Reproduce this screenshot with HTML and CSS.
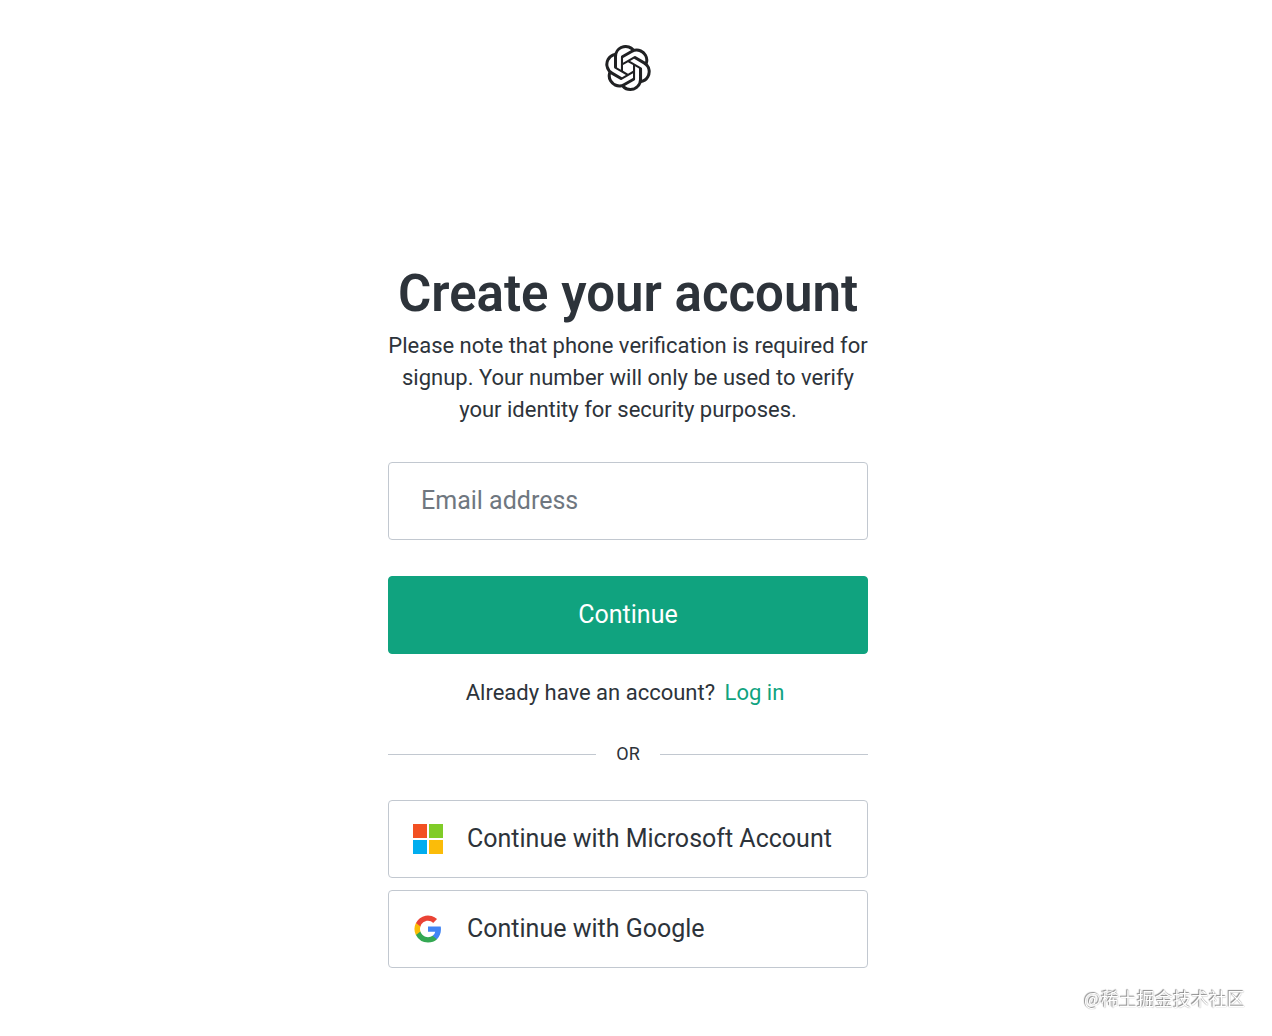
FILE: index.html
```
<!doctype html>
<html lang="en">
<head>
    <meta charset="utf-8">
    <meta name="viewport" content="width=device-width, initial-scale=1">

    <title>Create your account</title>

    <link rel="stylesheet" href="styles.css">
</head>
<body>

<header class="page-header">
    <svg class="logo" viewBox="0 0 24 24" role="img" aria-label="OpenAI">
        <path d="M22.2819 9.8211a5.9847 5.9847 0 0 0-.5157-4.9108 6.0462 6.0462 0 0 0-6.5098-2.9A6.0651 6.0651 0 0 0 4.9807 4.1818a5.9847 5.9847 0 0 0-3.9977 2.9 6.0462 6.0462 0 0 0 .7427 7.0966 5.98 5.98 0 0 0 .511 4.9107 6.051 6.051 0 0 0 6.5146 2.9001A5.9847 5.9847 0 0 0 13.2599 24a6.0557 6.0557 0 0 0 5.7718-4.2058 5.9894 5.9894 0 0 0 3.9977-2.9001 6.0557 6.0557 0 0 0-.7475-7.0729zm-9.022 12.6081a4.4755 4.4755 0 0 1-2.8764-1.0408l.1419-.0804 4.7783-2.7582a.7948.7948 0 0 0 .3927-.6813v-6.7369l2.02 1.1686a.071.071 0 0 1 .038.052v5.5826a4.504 4.504 0 0 1-4.4945 4.4944zm-9.6607-4.1254a4.4708 4.4708 0 0 1-.5346-3.0137l.142.0852 4.783 2.7582a.7712.7712 0 0 0 .7806 0l5.8428-3.3685v2.3324a.0804.0804 0 0 1-.0332.0615L9.74 19.9502a4.4992 4.4992 0 0 1-6.1408-1.6464zM2.3408 7.8956a4.485 4.485 0 0 1 2.3655-1.9728V11.6a.7664.7664 0 0 0 .3879.6765l5.8144 3.3543-2.0201 1.1685a.0757.0757 0 0 1-.071 0l-4.8303-2.7865A4.504 4.504 0 0 1 2.3408 7.872zm16.5963 3.8558L13.1038 8.364 15.1192 7.2a.0757.0757 0 0 1 .071 0l4.8303 2.7913a4.4944 4.4944 0 0 1-.6765 8.1042v-5.6772a.79.79 0 0 0-.407-.667zm2.0107-3.0231l-.142-.0852-4.7735-2.7818a.7759.7759 0 0 0-.7854 0L9.409 9.2297V6.8974a.0662.0662 0 0 1 .0284-.0615l4.8303-2.7866a4.4992 4.4992 0 0 1 6.6802 4.66zM8.3065 12.863l-2.02-1.1638a.0804.0804 0 0 1-.038-.0567V6.0742a4.4992 4.4992 0 0 1 7.3757-3.4537l-.142.0805L8.704 5.459a.7948.7948 0 0 0-.3927.6813zm1.0976-2.3654l2.602-1.4998 2.6069 1.4998v2.9994l-2.5974 1.4997-2.6067-1.4997Z"></path>
    </svg>
</header>

<main class="signup">
    <h1>Create your account</h1>
    <p class="note">Please note that phone verification is required for signup. Your number will only be used to verify your identity for security purposes.</p>

    <form action="/signup" method="post">
        <input class="field" type="email" name="email" aria-label="Email address" placeholder="Email address">
        <button class="btn-primary" type="submit">Continue</button>
    </form>

    <p class="login">Already have an account? <a href="/login">Log in</a></p>

    <div class="divider">OR</div>

    <div class="social">
        <button class="btn-social" type="button">
            <svg viewBox="0 0 30 30">
                <path fill="#f25022" d="M0 0h14v14H0z"></path>
                <path fill="#80cc28" d="M16 0h14v14H16z"></path>
                <path fill="#00adef" d="M0 16h14v14H0z"></path>
                <path fill="#fbbc09" d="M16 16h14v14H16z"></path>
            </svg>
            <span>Continue with Microsoft Account</span>
        </button>
        <button class="btn-social" type="button">
            <svg viewBox="-1 -1 20 20">
                <path fill="#4285f4" d="M17.64 9.2c0-.64-.06-1.25-.16-1.84H9v3.48h4.84a4.14 4.14 0 0 1-1.8 2.72v2.26h2.92c1.7-1.57 2.68-3.88 2.68-6.62z"></path>
                <path fill="#34a853" d="M9 18c2.43 0 4.47-.8 5.96-2.18l-2.92-2.26c-.8.54-1.83.86-3.04.86-2.34 0-4.33-1.58-5.04-3.71H.96v2.33A9 9 0 0 0 9 18z"></path>
                <path fill="#fbbc05" d="M3.96 10.71a5.4 5.4 0 0 1 0-3.42V4.96H.96a9 9 0 0 0 0 8.08l3-2.33z"></path>
                <path fill="#ea4335" d="M9 3.58c1.32 0 2.5.45 3.44 1.35l2.58-2.58A9 9 0 0 0 .96 4.96l3 2.33C4.67 5.16 6.66 3.58 9 3.58z"></path>
            </svg>
            <span>Continue with Google</span>
        </button>
    </div>
</main>

<div class="watermark" lang="zh">@稀土掘金技术社区</div>

</body>
</html>
```
FILE: styles.css
```
* {
    box-sizing: border-box;
}

body {
    margin: 0;
    padding: 45px 16px 44px 0;
    font-family: Roboto, 'Liberation Sans', sans-serif;
    font-size: 22px;
    line-height: 32px;
    color: #2d333a;
    background-color: #fff;
}

.page-header {
    display: flex;
    justify-content: center;
    margin-bottom: 173px;
}

.logo {
    width: 46px;
    height: 46px;
    fill: #202123;
}

.signup {
    max-width: 480px;
    margin: 0 auto;
    text-align: center;
}

h1 {
    margin: 0 0 6px;
    font-size: 51px;
    line-height: 60px;
    font-weight: 600;
}

.note {
    margin: 0 0 36px;
}

.field,
.btn-primary,
.btn-social {
    display: block;
    width: 100%;
    height: 78px;
    border: 1px solid #c2c8d0;
    border-radius: 4px;
    background-color: #fff;
    color: inherit;
    font-family: inherit;
    font-size: 25px;
}

.field {
    padding: 0 32px 2px;
    margin-bottom: 36px;
}

.field::placeholder {
    color: #6f7780;
    opacity: 1;
}

.btn-primary {
    padding: 0 0 2px;
    border-color: #10a37f;
    background-color: #10a37f;
    color: #fff;
    cursor: pointer;
}

.login {
    margin: 23px 0 29px;
}

.login a {
    margin: 0 6px 0 4px;
    color: #10a37f;
    text-decoration: none;
}

.divider {
    display: flex;
    align-items: center;
    gap: 20px;
    margin-bottom: 30px;
    font-size: 18px;
}

.divider::before,
.divider::after {
    content: '';
    flex: 1;
    height: 1px;
    background-color: #c2c8d0;
}

.social {
    display: grid;
    gap: 12px;
}

.btn-social {
    display: flex;
    align-items: center;
    gap: 24px;
    padding: 0 24px;
    text-align: left;
    cursor: pointer;
}

.btn-social svg {
    width: 30px;
    height: 30px;
}

.btn-social span {
    padding-bottom: 2px;
}

.watermark {
    position: fixed;
    right: 27px;
    bottom: 22px;
    font-family: 'Noto Sans CJK SC', sans-serif;
    font-size: 18px;
    line-height: 32px;
    color: #fff;
    text-shadow: -1px -1px 1px #888, 0 0 1px #888;
}
```
